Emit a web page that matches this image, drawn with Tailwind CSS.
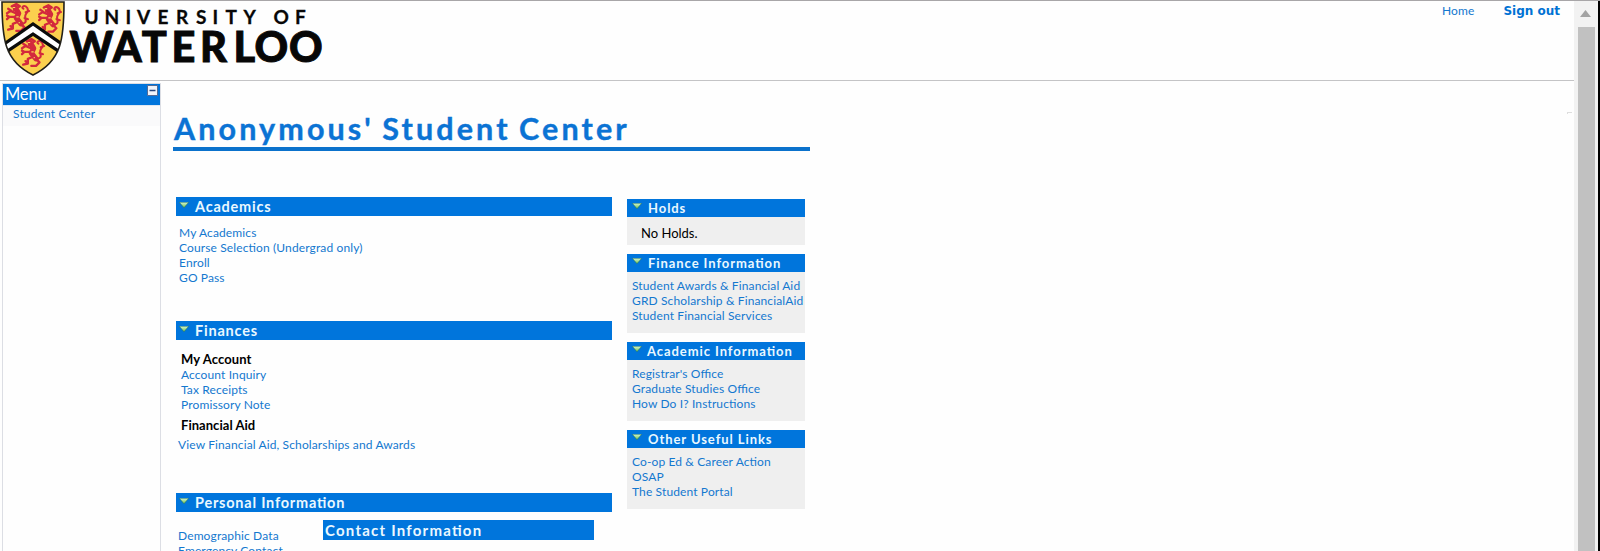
<!DOCTYPE html>
<html lang="en">
<head>
<meta charset="utf-8">
<title>Student Center</title>
<script src="https://cdn.jsdelivr.net/npm/@tailwindcss/browser@4"></script>
</head>
<body class="bg-[#fefefe] overflow-hidden font-['Lato',sans-serif] text-[12px] leading-[15px] tracking-[0.125px] text-[#1478cf] whitespace-nowrap [font-feature-settings:'liga'_1]">
<svg class="absolute w-0 h-0">
  <defs>
    <linearGradient id="green" x1="0" y1="0" x2="0" y2="1"><stop offset="0" stop-color="#d5f5d0"/><stop offset="1" stop-color="#6fc04f"/></linearGradient>
    <symbol id="arrow" viewBox="0 0 10 6"><path d="M.3.3h9.400L5 5.700z" fill="url(#green)" stroke="#27704f" stroke-width=".5"/></symbol>
    <symbol id="lion" viewBox="0 0 20 24" overflow="visible">
      <g fill="none" stroke="#d3293d" stroke-linecap="round" stroke-linejoin="round">
        <path d="M8 3L11 8L9 12L13 17" stroke-width="4.500"/>
        <path d="M5 2l4-2 3 2-5 3M9 8L4 6 1 8M2 4l3 2M9 11H3l-2 2M1 10l2 1M11 15l-5 2v4l-4 1M4 19l2 2M13 17l3 3-3 3H9" stroke-width="2"/>
        <path d="M14 17c6-1 1-5 3-8 3-3 2-6 0-7s-4 1-2 2M16 12l3 1M17 7l3-1" stroke-width="1.800"/>
      </g>
      <path d="M6 3h2M9 11h2M11 16h1" stroke="#f8d45c" stroke-width="1"/>
    </symbol>
  </defs>
</svg>
<div class="flex w-[1600px] h-[551px] border-t border-[#a8a6a8]">
  <div class="w-[1574px] h-[550px] overflow-hidden">
    <header class="flex justify-between h-[80px] border-b border-[#c4c4c6]">
      <svg width="330" height="79" viewBox="0 1 330 79" role="img" aria-label="University of Waterloo">
        <clipPath id="shield"><path d="M2 2H64C64 38 62 61 33 75C4 61 2 38 2 2Z"/></clipPath>
        <g clip-path="url(#shield)">
          <path d="M0 0H68V80H0z" fill="#fbd04e"/>
          <use href="#lion" x="5" y="4" width="25" height="28"/>
          <use href="#lion" x="38" y="4" width="23" height="30"/>
          <use href="#lion" x="20" y="39" width="25" height="28"/>
          <path d="M0 45L33 22L66 45V58L33 36L0 58Z" fill="#0c0c0c"/>
          <path d="M0 50L33 27L66 50V53L33 31L0 53Z" fill="#fff" stroke="#fff" stroke-width="2"/>
        </g>
        <path d="M2 2H64C64 38 62 61 33 75C4 61 2 38 2 2Z" fill="none" stroke="#222019" stroke-width="1.600"/>
        <g fill="#070707" font-family="Lato, sans-serif" letter-spacing="0">
          <text y="23.500" font-size="19" font-weight="700" x="84.500 104.500 125.500 137 157.500 176 196 212.500 225.500 243.500 273.500 295" stroke="#070707" stroke-width=".3">UNIVERSITYOF</text>
          <text y="62.400" font-size="41.500" font-weight="900" x="69.500 112.500 141.700 171.500 200 233.500 254.500 289" stroke="#070707" stroke-width=".9">WATERLOO</text>
        </g>
      </svg>
      <nav class="flex items-start gap-[29px] pr-[14px] pt-[2px]">
        <a>Home</a>
        <a class="font-['DejaVu_Sans',sans-serif] font-bold tracking-normal leading-[16px] text-[#0072d4]">Sign out</a>
      </nav>
    </header>
    <div class="flex">
      <aside class="w-[161px] h-[470px] pt-[2px] pl-[2px]">
        <div class="h-full border-x border-t border-[#dcdee4]">
          <div class="flex justify-between h-[21px] bg-[#0075dc] text-white text-[16.500px] leading-[20px] tracking-[-0.200px] pl-[2px] pr-px">
            <span>Menu</span>
            <svg class="mt-px" width="12" height="12"><path d="M.5.5h10v10H.5z" fill="#f1f4fa" stroke="#536b96"/><path d="M2.500 5.500h6" stroke="#26477f" stroke-width="1.500"/></svg>
          </div>
          <div class="h-[21px] bg-[#fafafb] border-t border-[#e0e8f3] pl-[10px] leading-[15px] tracking-[0.150px]">Student Center</div>
        </div>
      </aside>
      <main class="pl-[12px] pt-[29px] w-[649px]">
        <h1 class="h-[41px] w-[637px] border-b-4 border-[#0b72cc] text-[30.500px] leading-[37px] font-bold tracking-[3.100px] [word-spacing:-2px] [-webkit-text-stroke:0.4px_#0b73d4] text-[#0b73d4] pl-px">Anonymous' Student Center</h1>
        <div class="flex pl-[3px] pt-[46px] gap-[15px]">
          <div class="w-[436px]">
            <h2 class="flex h-[19px] bg-[#0075dc] text-[#eaf8ff] text-[14.500px] leading-[20px] font-bold tracking-[0.780px] pl-[3px] gap-[6px]"><svg class="mt-[5px]" width="10" height="6"><use href="#arrow"/></svg>Academics</h2>
            <div class="flex flex-col pl-[3px] pt-[9px] h-[105px]"><a>My Academics</a><a>Course Selection (Undergrad only)</a><a>Enroll</a><a>GO Pass</a></div>
            <h2 class="flex h-[19px] bg-[#0075dc] text-[#eaf8ff] text-[14.500px] leading-[20px] font-bold tracking-[0.780px] pl-[3px] gap-[6px]"><svg class="mt-[5px]" width="10" height="6"><use href="#arrow"/></svg>Finances</h2>
            <div class="flex flex-col pl-[5px] pt-[12px] h-[153px]">
              <h3 class="text-[13px] font-bold text-black tracking-[0.100px]">My Account</h3>
              <a>Account Inquiry</a><a>Tax Receipts</a><a>Promissory Note</a>
              <h3 class="text-[13px] font-bold text-black tracking-[0.040px] mt-[6px]">Financial Aid</h3>
              <a class="mt-[4px] -ml-[3px]">View Financial Aid, Scholarships and Awards</a>
            </div>
            <h2 class="flex h-[19px] bg-[#0075dc] text-[#eaf8ff] text-[14.500px] leading-[20px] font-bold tracking-[0.780px] pl-[3px] gap-[6px]"><svg class="mt-[5px]" width="10" height="6"><use href="#arrow"/></svg>Personal Information</h2>
            <div class="flex h-[40px]">
              <div class="flex flex-col w-[147px] pl-[2px] pt-[16px]"><a>Demographic Data</a><a>Emergency Contact</a></div>
              <h3 class="mt-[8px] w-[271px] h-[20px] bg-[#0075dc] text-[#eaf8ff] text-[15px] leading-[20px] font-bold tracking-[1.230px] pl-[2px]">Contact Information</h3>
            </div>
          </div>
          <div class="w-[178px] pt-[2px] flex flex-col gap-[9px]">
            <section class="bg-[#efefef] h-[46px]">
              <h2 class="flex h-[18px] bg-[#0075dc] text-[#eaf8ff] text-[13px] leading-[18px] font-bold tracking-[0.930px] pl-[5px] gap-[6px]"><svg class="mt-[4px]" width="10" height="6"><use href="#arrow"/></svg>Holds</h2>
              <p class="pl-[14px] pt-[9px] text-[13px] leading-[15px] tracking-normal text-black">No Holds.</p>
            </section>
            <section class="bg-[#efefef] h-[79px]">
              <h2 class="flex h-[18px] bg-[#0075dc] text-[#eaf8ff] text-[13px] leading-[18px] font-bold tracking-[0.930px] pl-[5px] gap-[6px]"><svg class="mt-[4px]" width="10" height="6"><use href="#arrow"/></svg>Finance Information</h2>
              <div class="flex flex-col pl-[5px] pt-[6px]"><a>Student Awards &amp; Financial Aid</a><a>GRD Scholarship &amp; FinancialAid</a><a>Student Financial Services</a></div>
            </section>
            <section class="bg-[#efefef] h-[79px]">
              <h2 class="flex h-[18px] bg-[#0075dc] text-[#eaf8ff] text-[13px] leading-[18px] font-bold tracking-[0.930px] pl-[5px] gap-[5px]"><svg class="mt-[4px]" width="10" height="6"><use href="#arrow"/></svg>Academic Information</h2>
              <div class="flex flex-col pl-[5px] pt-[6px]"><a>Registrar's Office</a><a>Graduate Studies Office</a><a>How Do I? Instructions</a></div>
            </section>
            <section class="bg-[#efefef] h-[79px]">
              <h2 class="flex h-[18px] bg-[#0075dc] text-[#eaf8ff] text-[13px] leading-[18px] font-bold tracking-[0.930px] pl-[5px] gap-[6px]"><svg class="mt-[4px]" width="10" height="6"><use href="#arrow"/></svg>Other Useful Links</h2>
              <div class="flex flex-col pl-[5px] pt-[6px]"><a>Co-op Ed &amp; Career Action</a><a>OSAP</a><a>The Student Portal</a></div>
            </section>
          </div>
        </div>
      </main>
      <div class="flex-1 flex justify-end pt-[31px] pr-[2px]"><div class="w-[5px] h-[2px] border-t border-l border-[#dedede]"></div></div>
    </div>
  </div>
  <div class="w-[24px] h-[550px] bg-[#f2f2f2] pl-[4px]">
    <svg width="17" height="26"><path d="M2 16L7.500 9L13 16z" fill="#a3a3a3"/></svg>
    <div class="w-[17px] h-[524px] bg-[#c1c1c1]"></div>
  </div>
  <div class="w-[2px] h-[550px] bg-black"></div>
</div>
</body>
</html>
